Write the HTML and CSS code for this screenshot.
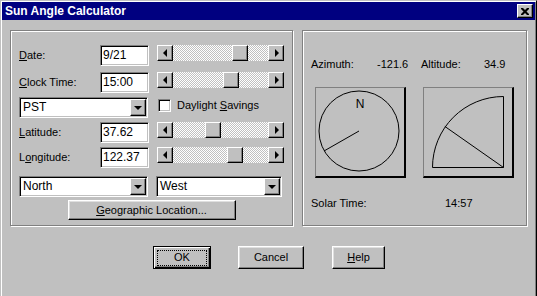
FILE: index.html
```html
<!DOCTYPE html>
<html>
<head>
<meta charset="utf-8">
<title>Sun Angle Calculator</title>
<link rel="stylesheet" href="styles.css">
</head>
<body>
<div class="window">
  <div class="titlebar">
    <span class="title">Sun Angle Calculator</span>
    <span class="close"><svg width="8" height="7" viewBox="0 0 8 7"><path d="M0 0h2l2 2 2-2h2v1L5.5 3.5 8 6v1H6L4 5 2 7H0V6l2.5-2.5L0 1z" fill="#000"/></svg></span>
  </div>
  <div class="content">
    <div class="groups">
      <div class="group left">
        <div class="row r-date">
          <span class="label"><u>D</u>ate:</span>
          <span class="edit">9/21</span>
          <div class="scroll"><span class="sbtn"><i class="al"></i></span><span class="track"><span class="thumb" style="margin-left:59px"></span></span><span class="sbtn"><i class="ar"></i></span></div>
        </div>
        <div class="row r-clock">
          <span class="label"><u>C</u>lock Time:</span>
          <span class="edit">15:00</span>
          <div class="scroll"><span class="sbtn"><i class="al"></i></span><span class="track"><span class="thumb" style="margin-left:50px"></span></span><span class="sbtn"><i class="ar"></i></span></div>
        </div>
        <div class="row r-zone">
          <div class="combo w-left"><span class="ctext">PST</span><span class="cbtn"><i class="ad"></i></span></div>
          <span class="check"></span>
          <span class="checklabel">Daylight <u>S</u>avings</span>
        </div>
        <div class="row r-lat">
          <span class="label"><u>L</u>atitude:</span>
          <span class="edit">37.62</span>
          <div class="scroll"><span class="sbtn"><i class="al"></i></span><span class="track"><span class="thumb" style="margin-left:32px"></span></span><span class="sbtn"><i class="ar"></i></span></div>
        </div>
        <div class="row r-long">
          <span class="label">L<u>o</u>ngitude:</span>
          <span class="edit">122.37</span>
          <div class="scroll"><span class="sbtn"><i class="al"></i></span><span class="track"><span class="thumb" style="margin-left:54px"></span></span><span class="sbtn"><i class="ar"></i></span></div>
        </div>
        <div class="row r-dir">
          <div class="combo w-left"><span class="ctext">North</span><span class="cbtn"><i class="ad"></i></span></div>
          <div class="combo w-right"><span class="ctext">West</span><span class="cbtn"><i class="ad"></i></span></div>
        </div>
        <div class="row r-geo">
          <span class="button geo"><span><u>G</u>eographic Location...</span></span>
        </div>
      </div>
      <div class="group right">
        <div class="trow">
          <span class="az-l">Azimuth:</span>
          <span class="az-v">-121.6</span>
          <span class="al-l">Altitude:</span>
          <span class="al-v">34.9</span>
        </div>
        <div class="boxes">
          <div class="pic">
            <svg width="88" height="88" viewBox="0 0 88 88">
              <circle cx="43" cy="43" r="40" fill="none" stroke="#000" stroke-width="1"/>
              <line x1="43" y1="43" x2="8" y2="63" stroke="#000" stroke-width="1"/>
              <text x="44" y="20" text-anchor="middle" class="svgtext">N</text>
            </svg>
          </div>
          <div class="pic">
            <svg width="88" height="88" viewBox="0 0 88 88">
              <path d="M79.5 8.5 V79.5 H8.5 A71 71 0 0 1 79.5 8.5" fill="none" stroke="#000" stroke-width="1"/>
              <line x1="79.5" y1="79.5" x2="20.8" y2="38.4" stroke="#000" stroke-width="1"/>
            </svg>
          </div>
        </div>
        <div class="trow solar">
          <span class="st-l">Solar Time:</span>
          <span class="st-v">14:57</span>
        </div>
      </div>
    </div>
    <div class="buttons">
      <span class="button default ok"><span class="focus">OK</span></span>
      <span class="button cancel"><span>Cancel</span></span>
      <span class="button help"><span><u>H</u>elp</span></span>
    </div>
  </div>
</div>
</body>
</html>
```

FILE: styles.css
```css
html, body {
  margin: 0;
  padding: 0;
  overflow: hidden;
  background: #c0c0c0;
}
body {
  font-family: "Liberation Sans", Arial, sans-serif;
  font-size: 11px;
  color: #000;
  line-height: 13px;
}
u { text-decoration: underline; text-underline-offset: 1px; }

.window {
  width: 537px;
  height: 300px;
  box-sizing: border-box;
  background: #c0c0c0;
  border: 1px solid;
  border-color: #c0c0c0 #000 #000 #c0c0c0;
  box-shadow: inset 1px 1px #fff, inset -1px -1px #808080;
  padding: 1px;
}

.titlebar {
  height: 18px;
  background: #000080;
  display: flex;
  align-items: center;
  justify-content: space-between;
  padding: 0 2px 0 3px;
}
.title {
  color: #fff;
  font-weight: bold;
  font-size: 12px;
}
.close {
  width: 16px;
  height: 14px;
  box-sizing: border-box;
  display: flex;
  align-items: center;
  justify-content: center;
  background: #c0c0c0;
  border: 1px solid;
  border-color: #fff #000 #000 #fff;
  box-shadow: inset -1px -1px #808080;
}

.content {
  padding: 10px 8px 0 8px;
}
.groups {
  display: flex;
  gap: 9px;
}
.group {
  height: 196px;
  box-sizing: border-box;
  border: 1px solid #808080;
  box-shadow: inset 1px 1px #fff, 1px 1px #fff;
}
.group.left {
  width: 283px;
  padding: 14px 8px 0 8px;
  display: flex;
  flex-direction: column;
}
.group.right {
  width: 225px;
  padding: 27px 0 0 8px;
}

.row {
  display: flex;
  align-items: flex-start;
  height: 21px;
}
.r-clock { margin-top: 6px; }
.r-zone { margin-top: 4px; }
.r-lat { margin-top: 4px; }
.r-long { margin-top: 4px; }
.r-dir { margin-top: 8px; gap: 8px; }
.r-geo { margin-top: 3px; justify-content: center; }

.label {
  width: 81px;
  line-height: 21px;
}
.edit {
  width: 49px;
  height: 21px;
  box-sizing: border-box;
  background: #fff;
  border: 1px solid;
  border-color: #808080 #fff #fff #808080;
  box-shadow: inset 1px 1px #000, inset -1px -1px #c0c0c0;
  padding: 0 0 0 2px;
  font-size: 12px;
  line-height: 19px;
  margin-right: 8px;
}

.scroll {
  width: 127px;
  height: 16px;
  display: flex;
}
.sbtn, .cbtn, .thumb {
  width: 16px;
  height: 16px;
  box-sizing: border-box;
  background: #c0c0c0;
  border: 1px solid;
  border-color: #fff #000 #000 #fff;
  box-shadow: inset -1px -1px #808080;
  display: flex;
  align-items: center;
  justify-content: center;
  flex: none;
}
.track {
  flex: 1;
  display: flex;
  background: repeating-conic-gradient(#fff 0 25%, #c0c0c0 0 50%) 0 0 / 2px 2px;
}
.al, .ar, .ad {
  display: block;
  width: 0;
  height: 0;
}
.al {
  border-top: 4px solid transparent;
  border-bottom: 4px solid transparent;
  border-right: 4px solid #000;
  margin-left: -1px;
}
.ar {
  border-top: 4px solid transparent;
  border-bottom: 4px solid transparent;
  border-left: 4px solid #000;
  margin-left: 1px;
}
.ad {
  border-left: 4px solid transparent;
  border-right: 4px solid transparent;
  border-top: 4px solid #000;
  margin-top: 1px;
}

.combo {
  height: 21px;
  box-sizing: border-box;
  display: flex;
  background: #fff;
  border: 1px solid;
  border-color: #808080 #fff #fff #808080;
  box-shadow: inset 1px 1px #000, inset -1px -1px #c0c0c0;
  padding: 1px;
  font-size: 12px;
}
.w-left { width: 129px; }
.w-right { width: 126px; }
.ctext {
  flex: 1;
  padding-left: 2px;
  line-height: 17px;
}
.cbtn {
  height: 17px;
}

.check {
  width: 13px;
  height: 13px;
  box-sizing: border-box;
  margin: 2px 0 0 10px;
  background: #fff;
  border: 1px solid;
  border-color: #808080 #fff #fff #808080;
  box-shadow: inset 1px 1px #000, inset -1px -1px #c0c0c0;
}
.checklabel {
  margin-left: 6px;
  line-height: 17px;
}

.button {
  box-sizing: border-box;
  height: 23px;
  display: flex;
  align-items: center;
  justify-content: center;
  background: #c0c0c0;
  border: 1px solid;
  border-color: #fff #000 #000 #fff;
  box-shadow: inset -1px -1px #808080, inset 1px 1px #dfdfdf;
}
.geo {
  width: 168px;
  height: 20px;
}

.trow {
  display: flex;
  height: 13px;
}
.az-l { width: 66px; }
.az-v { width: 44px; }
.al-l { width: 63px; }
.st-l { width: 134px; }
.solar { margin-top: 19px; }

.boxes {
  display: flex;
  gap: 17px;
  margin: 16px 0 0 4px;
}
.pic {
  width: 91px;
  height: 91px;
  box-sizing: border-box;
  border-style: solid;
  border-width: 1px 2px 2px 1px;
  border-color: #808080 #000 #000 #808080;
}
.pic svg { display: block; }
.svgtext {
  font-family: "Liberation Sans", Arial, sans-serif;
  font-size: 12px;
}

.buttons {
  display: flex;
  margin: 20px 0 0 143px;
}
.ok { width: 58px; }
.cancel { width: 66px; margin-left: 27px; }
.help { width: 53px; margin-left: 28px; }
.default {
  border: 1px solid #000;
  box-shadow: inset 1px 1px #fff, inset -1px -1px #000, inset -2px -2px #808080;
}
.focus {
  width: 50px;
  height: 16px;
  box-sizing: border-box;
  border: 1px dotted #000;
  display: flex;
  align-items: center;
  justify-content: center;
}
```
